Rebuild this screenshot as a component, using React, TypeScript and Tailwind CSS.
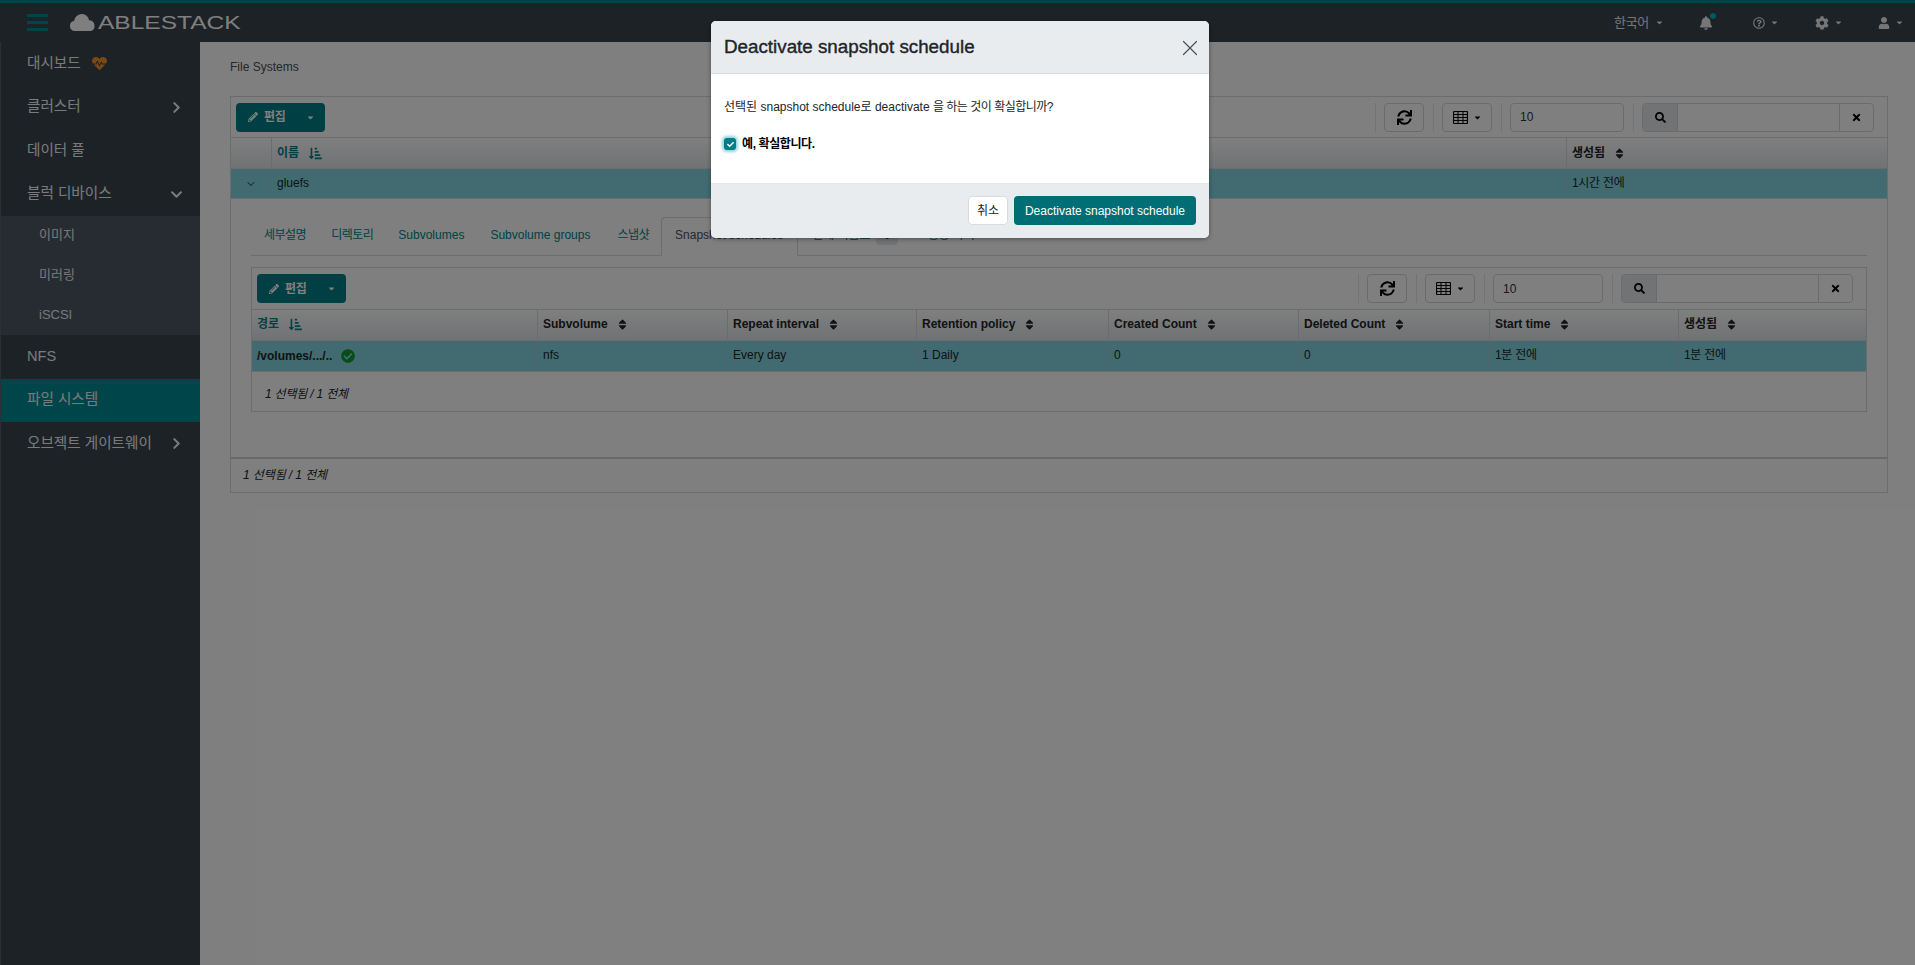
import { ChevronDown, X } from 'lucide-react'
import {
  FaBell,
  FaCaretDown,
  FaCheck,
  FaCheckCircle,
  FaChevronDown,
  FaChevronRight,
  FaCog,
  FaHeartbeat,
  FaPencilAlt,
  FaRegQuestionCircle,
  FaSearch,
  FaSort,
  FaSortAmountDownAlt,
  FaSync,
  FaTimes,
  FaUser,
} from 'react-icons/fa'

const font = "font-['Liberation_Sans','Noto_Sans_CJK_KR',sans-serif]"

type Column = { label: string; width: string; sorted?: boolean }

const subColumns: Column[] = [
  { label: '경로', width: 'w-[286px]', sorted: true },
  { label: 'Subvolume', width: 'w-[190px]' },
  { label: 'Repeat interval', width: 'w-[189px]' },
  { label: 'Retention policy', width: 'w-[192px]' },
  { label: 'Created Count', width: 'w-[190px]' },
  { label: 'Deleted Count', width: 'w-[191px]' },
  { label: 'Start time', width: 'w-[189px]' },
  { label: '생성됨', width: 'flex-1' },
]

function NavItem({ label, chevron, active, extra }: { label: string; chevron?: 'right' | 'down'; active?: boolean; extra?: boolean }) {
  return (
    <div className={`flex h-[43.5px] items-center pl-[26px] pr-[17px] text-[14.6px] text-[#f4f5f6] ${active ? 'bg-[#008a92]' : ''}`}>
      <span>{label}</span>
      {extra && <FaHeartbeat className="ml-[11px] text-[15px] text-[#f2902a]" />}
      {chevron === 'right' && <FaChevronRight className="ml-auto text-[13px]" />}
      {chevron === 'down' && <FaChevronDown className="ml-auto text-[13px]" />}
    </div>
  )
}

function Sep() {
  return <div className="mx-[8.5px] h-[29px] w-px bg-[#e4e6e8]" />
}

function TableIcon() {
  return (
    <svg viewBox="0 0 15 13" className="h-[13px] w-[15px] fill-none stroke-black" strokeWidth="1">
      <rect x="0.5" y="0.5" width="14" height="12" rx="1" strokeWidth="1.2" />
      <path d="M0.5 3.5h14M0.5 6.5h14M0.5 9.5h14M5 0.5v12M10 0.5v12" />
    </svg>
  )
}

function Toolbar({ left, height, inputWidth, right }: { left: string; height: string; inputWidth: string; right: string }) {
  return (
    <div className={`flex items-center border-b border-[#d5d8db] ${height} ${left} ${right}`}>
      <div className="flex h-[29px] w-[89px] items-center rounded-[4px] bg-[#007f88] pl-[12px] text-[12px] font-bold text-white">
        <FaPencilAlt className="text-[10px]" />
        <span className="ml-[6px] tracking-[-0.3px]">편집</span>
        <FaCaretDown className="ml-auto mr-[10px] text-[9px]" />
      </div>
      <div className="ml-auto" />
      <Sep />
      <div className="flex h-[29px] w-[40px] items-center justify-center rounded-[4px] border border-[#d3d6d9]">
        <FaSync className="text-[15px] text-black" />
      </div>
      <Sep />
      <div className="flex h-[29px] w-[50px] items-center justify-center gap-[5px] rounded-[4px] border border-[#d3d6d9]">
        <TableIcon />
        <FaCaretDown className="text-[9px] text-black" />
      </div>
      <Sep />
      <div className={`flex h-[29px] ${inputWidth} items-center rounded-[4px] border border-[#d3d6d9] pl-[9px] text-[12px] text-[#333]`}>10</div>
      <Sep />
      <div className="flex h-[29px] w-[232px] rounded-[4px] border border-[#d3d6d9]">
        <div className="flex w-[35px] items-center justify-center rounded-l-[4px] border-r border-[#d3d6d9] bg-[#e3e6ea]">
          <FaSearch className="text-[11px] text-black" />
        </div>
        <div className="flex-1" />
        <div className="flex w-[34px] items-center justify-center border-l border-[#d3d6d9]">
          <FaTimes className="text-[11px] text-black" />
        </div>
      </div>
    </div>
  )
}

function HeaderCell({ column, lift }: { column: Column; lift?: boolean }) {
  return (
    <div className={`flex h-full items-center border-r border-[#d5d8db] pl-[5px] last:border-r-0 ${lift ? 'pb-[2px]' : ''} ${column.width}`}>
      <span className={`text-[12px] font-bold ${column.sorted ? 'text-[#00848c]' : 'text-[#212529]'}`}>{column.label}</span>
      {column.sorted ? (
        <FaSortAmountDownAlt className="ml-[10px] text-[13px] text-[#00848c]" />
      ) : (
        <FaSort className="ml-[8px] text-[13px] text-[#212529]" />
      )}
    </div>
  )
}

export default function App() {
  return (
    <div className={`relative h-[965px] overflow-hidden bg-white text-[12px] text-[#212529] ${font}`}>
      <div className="flex h-[42px] items-center border-t-[3px] border-[#008a92] bg-[#38444d] pl-[27px] text-white">
        <div className="flex h-[17px] w-[21px] flex-col justify-between">
          <div className="h-[3px] bg-[#008a92]" />
          <div className="h-[3px] bg-[#008a92]" />
          <div className="h-[3px] bg-[#008a92]" />
        </div>
        <svg viewBox="0 0 28 17" className="ml-[21px] h-[17px] w-[28px] fill-white">
          <path d="M6 17a5 5 0 0 1-1-9.9A8 8 0 0 1 13 0a7 7 0 0 1 7 6.2A5.6 5.6 0 0 1 22 17z" />
        </svg>
        <span className="ml-px w-[114px] origin-left scale-x-[1.29] text-[19px] leading-none text-white">ABLESTACK</span>
        <div className="ml-auto flex items-center text-[#e9ecef]">
          <span className="text-[13px] tracking-[-0.3px]">한국어</span>
          <FaCaretDown className="ml-[6px] text-[9px]" />
          <div className="relative ml-[35px]">
            <FaBell className="text-[14px]" />
            <div className="absolute -right-[3px] -top-[3px] h-[6px] w-[6px] rounded-full bg-[#00b3bd]" />
          </div>
          <FaRegQuestionCircle className="ml-[40px] text-[12px]" />
          <FaCaretDown className="ml-[5px] text-[9px]" />
          <FaCog className="ml-[36px] text-[14px]" />
          <FaCaretDown className="ml-[5px] text-[9px]" />
          <FaUser className="ml-[35px] text-[12px]" />
          <FaCaretDown className="ml-[5px] mr-[11px] text-[9px]" />
        </div>
      </div>

      <div className="flex h-[923px]">
        <div className="w-[200px] shrink-0 border-l border-[#566069] bg-[#38444d]">
          <NavItem label="대시보드" extra />
          <NavItem label="클러스터" chevron="right" />
          <NavItem label="데이터 풀" />
          <NavItem label="블럭 디바이스" chevron="down" />
          <div className="bg-[#4c5964] text-[13px] text-[#eceeef]">
            <div className="flex h-[40px] items-center pb-[2px] pl-[38px]">이미지</div>
            <div className="flex h-[40px] items-center pb-[2px] pl-[38px]">미러링</div>
            <div className="flex h-[39px] items-center pb-px pl-[38px]">iSCSI</div>
          </div>
          <NavItem label="NFS" />
          <NavItem label="파일 시스템" active />
          <NavItem label="오브젝트 게이트웨이" chevron="right" />
        </div>

        <div className="flex-1 pl-[30px] pr-[27px]">
          <div className="flex h-[54px] items-center pb-[4px] text-[12px] text-[#4a4f55]">File Systems</div>
          <div className="border border-[#d5d8db]">
            <Toolbar left="pl-[5px]" height="h-[41px]" inputWidth="w-[114px]" right="pr-[13px]" />
            <div className="flex h-[31px] border-b border-[#d5d8db] bg-linear-to-b from-white to-[#e0e4e8]">
              <div className="w-[41px] border-r border-[#d5d8db]" />
              <HeaderCell column={{ label: '이름', width: 'w-[1295px]', sorted: true }} />
              <HeaderCell column={{ label: '생성됨', width: 'flex-1' }} />
            </div>
            <div className="flex h-[30px] items-center border-b border-[#d5d8db] bg-[#82d6e0]">
              <div className="flex h-full w-[41px] items-center justify-center border-r border-[#a9c9ce]">
                <ChevronDown size={12} />
              </div>
              <div className="flex h-full w-[1295px] items-center border-r border-[#a9c9ce] pb-px pl-[5px]">gluefs</div>
              <div className="pb-px pl-[5px] tracking-[-0.3px]">1시간 전에</div>
            </div>

            <div className="h-[258px] px-[20px] pt-[18px]">
              <div className="flex h-[39px] whitespace-nowrap border-b border-[#d5d8db] pb-[3px] text-[12px] text-[#00848c]">
                <div className="flex items-center pl-[13px] pr-[12px] tracking-[-0.5px]">세부설명</div>
                <div className="flex items-center pl-[13px] pr-[12px] tracking-[-0.5px]">디렉토리</div>
                <div className="flex items-center px-[13px]">Subvolumes</div>
                <div className="flex items-center pl-[13px] pr-[15px]">Subvolume groups</div>
                <div className="flex items-center px-[12px] tracking-[-0.5px]">스냅샷</div>
                <div className="-mb-[4px] flex w-[137px] items-center rounded-t-[4px] border border-[#d5d8db] border-b-white bg-white px-[13px] pb-[3px] text-[#495057]">
                  Snapshot schedules
                </div>
                <div className="flex items-center pl-[14px]">
                  전체 이름표
                  <span className="ml-[5px] rounded-[4px] bg-[#e3e6ea] px-[8px] py-[1px] text-[#212529]">0</span>
                </div>
                <div className="flex items-center pl-[29px]">생성 사이즈</div>
              </div>

              <div className="mt-[11px] border border-[#d5d8db]">
                <Toolbar left="pl-[5px]" height="h-[42px]" inputWidth="w-[110px]" right="pr-[13px]" />
                <div className="flex h-[31px] border-b border-[#d5d8db] bg-linear-to-b from-white to-[#e0e4e8]">
                  {subColumns.map((column) => (
                    <HeaderCell key={column.label} column={column} lift />
                  ))}
                </div>
                <div className="flex h-[31px] border-b border-[#d5d8db] bg-[#82d6e0]">
                  <div className="flex h-full w-[286px] items-center border-r border-[#a9c9ce] pl-[5px] font-bold">
                    /volumes/.../..
                    <FaCheckCircle className="ml-[9px] text-[14px] text-[#0c9a30]" />
                  </div>
                  <div className="flex h-full w-[190px] items-center border-r border-[#a9c9ce] pb-[2px] pl-[5px]">nfs</div>
                  <div className="flex h-full w-[189px] items-center border-r border-[#a9c9ce] pb-[2px] pl-[5px]">Every day</div>
                  <div className="flex h-full w-[192px] items-center border-r border-[#a9c9ce] pb-[2px] pl-[5px]">1 Daily</div>
                  <div className="flex h-full w-[190px] items-center border-r border-[#a9c9ce] pb-[2px] pl-[5px]">0</div>
                  <div className="flex h-full w-[191px] items-center border-r border-[#a9c9ce] pb-[2px] pl-[5px]">0</div>
                  <div className="flex h-full w-[189px] items-center border-r border-[#a9c9ce] pb-[2px] pl-[5px] tracking-[-0.3px]">1분 전에</div>
                  <div className="flex h-full flex-1 items-center pb-[2px] pl-[5px] tracking-[-0.3px]">1분 전에</div>
                </div>
                <div className="flex h-[39px] items-center pl-[13px] pt-[5px] italic tracking-[-0.2px]">1 선택됨 / 1 전체</div>
              </div>
            </div>

            <div className="flex h-[35px] items-center border-t-2 border-[#cfd3d7] pb-px pl-[12px] italic tracking-[-0.1px]">1 선택됨 / 1 전체</div>
          </div>
        </div>
      </div>

      <div className="absolute inset-0 flex justify-center bg-black/50 pl-[5px] pt-[21px]">
        <div className="h-[217px] w-[498px] overflow-hidden rounded-[5px] bg-white shadow-[0_1px_4px_rgba(0,0,0,0.4)]">
          <div className="flex h-[53px] items-center justify-between border-b border-[#d8dce0] bg-[#e9ecef] pl-[13px] pr-[6px] pt-px">
            <span className="text-[18.8px] text-[#212529] [-webkit-text-stroke:0.4px_#212529]">Deactivate snapshot schedule</span>
            <X size={26} strokeWidth={1.1} className="text-[#495057]" />
          </div>
          <div className="h-[110px] border-b border-[#e4e7ea] px-[13px] pt-[24px]">
            <div className="text-[12px] text-[#212529]">
              선택된 snapshot schedule로 deactivate <span className="tracking-[-0.5px]">을 하는 것이 확실합니까?</span>
            </div>
            <div className="mt-[19px] flex items-center">
              <div className="flex h-[12px] w-[12px] items-center justify-center rounded-[3px] bg-[#017d87] shadow-[0_0_3px_2px_rgba(0,160,175,0.45)]">
                <FaCheck className="text-[7px] text-white" />
              </div>
              <span className="ml-[6px] text-[12px] font-bold tracking-[-0.4px] text-black">예, 확실합니다.</span>
            </div>
          </div>
          <div className="flex h-[54px] items-center justify-end gap-[6px] bg-[#e9ecef] pb-px pr-[13px]">
            <div className="flex h-[29px] w-[40px] items-center justify-center rounded-[4px] border border-[#d8dce0] bg-white text-[12px] text-[#212529]">취소</div>
            <div className="flex h-[29px] w-[182px] items-center justify-center rounded-[4px] bg-[#006e75] text-[12px] text-white">Deactivate snapshot schedule</div>
          </div>
        </div>
      </div>
    </div>
  )
}
